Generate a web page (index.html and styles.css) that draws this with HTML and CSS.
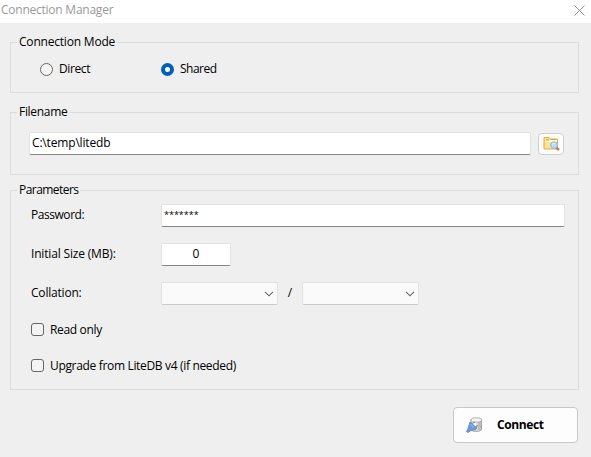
FILE: index.html
```html
<!DOCTYPE html>
<html lang="en">
<head>
<meta charset="utf-8">
<title>Connection Manager</title>
<link rel="stylesheet" href="styles.css">
</head>
<body>
<header class="titlebar">
  <span class="title">Connection Manager</span>
  <svg class="close" width="11" height="11" viewBox="0 0 11 11"><path d="M.5.5l10 10M10.5.5l-10 10" stroke="#8f8f8f" fill="none"/></svg>
</header>
<main class="content">
  <section class="group mode">
    <div class="legend"><span class="t-mode">Connection Mode</span></div>
    <div class="radios">
      <label class="option direct"><span class="radio"></span><span class="t-direct">Direct</span></label>
      <label class="option"><span class="radio checked"></span><span class="t-shared">Shared</span></label>
    </div>
  </section>
  <section class="group filename">
    <div class="legend"><span class="t-file">Filename</span></div>
    <div class="file-row">
      <div class="input path"><span class="t-path">C:\temp\litedb</span></div>
      <div class="browse">
        <svg width="17" height="16" viewBox="0 0 17 16">
          <path d="M1 1.5h5l1 1.500h7.500v10H1z" fill="#f8e29a" stroke="#dfad46"/>
          <path d="M2 5h4l1.500-1H14v2H2z" fill="#fffbe0"/>
          <path d="M2 12L4 6h10v6z" fill="#fae58f"/>
          <path d="M3 4h3M8 3.500h5" stroke="#d6a33d"/>
          <path d="M13.200 11.500l2.800 2.500" stroke="#b78354" stroke-width="2.400"/>
          <circle cx="11" cy="9" r="3.300" fill="#b9dcff" stroke="#8bb9eb"/>
          <path d="M9 8.500Q10 7 12 7.500" stroke="#e6f4ff" fill="none"/>
        </svg>
      </div>
    </div>
  </section>
  <section class="group params">
    <div class="legend"><span class="t-params">Parameters</span></div>
    <div class="field password"><span class="label"><span class="t-pass">Password:</span></span><div class="input"><span class="stars">*******</span></div></div>
    <div class="field size"><span class="label"><span class="t-size">Initial Size (MB):</span></span><div class="input">0</div></div>
    <div class="field collation">
      <span class="label"><span class="t-coll">Collation:</span></span>
      <div class="combo"><svg width="10" height="6" viewBox="0 0 10 6"><path d="M1 .8l4 4 4-4" stroke="#666" fill="none" stroke-width="1.100"/></svg></div>
      <span class="slash">/</span>
      <div class="combo"><svg width="10" height="6" viewBox="0 0 10 6"><path d="M1 .8l4 4 4-4" stroke="#666" fill="none" stroke-width="1.100"/></svg></div>
    </div>
    <label class="check readonly"><span class="box"></span><span class="t-read">Read only</span></label>
    <label class="check upgrade"><span class="box"></span><span class="t-upgrade">Upgrade from LiteDB v4 (if needed)</span></label>
  </section>
  <div class="connect">
    <svg width="17" height="16" viewBox="0 0 17 16">
      <path d="M5 3v9c0 3.200 10.500 3.200 10.500 0V3" fill="#dcdcde" stroke="#a3a3a6"/>
      <path d="M12 4.500h3v8l-3 1z" fill="#bdbdc0"/>
      <path d="M7 5.500h3v7H7z" fill="#fafafa"/>
      <ellipse cx="10.250" cy="3" rx="5.250" ry="2.200" fill="#f4f4f4" stroke="#adadaf"/>
      <path d="M4 5l7 6-2 1.800-4 .7L2 15.500.5 14.500 2 11.500z" fill="#6f9bdc" stroke="#5580c4" stroke-width=".8"/>
      <path d="M4.500 7.500l3.500 3" stroke="#a3c3f1"/>
      <path d="M6.500 6.500L9 5M10 9.500l2-1" stroke="#77777c"/>
    </svg>
    <span class="t-connect">Connect</span>
  </div>
</main>
</body>
</html>
```
FILE: styles.css
```css
* { box-sizing: border-box; }
body {
  margin: 0;
  width: 591px;
  height: 457px;
  overflow: hidden;
  background: #efefef;
  color: #000;
  font: 12px/18px "Open Sans", "Noto Sans", sans-serif;
  white-space: nowrap;
}
svg { display: block; flex: none; }
.titlebar {
  display: flex;
  justify-content: space-between;
  height: 23px;
  padding: 1px 6px 0 1px;
  background: #fff;
  color: #999;
}
.close { margin-top: 4px; }
.title { letter-spacing: -0.24px; }
.t-mode { letter-spacing: -0.2px; }
.t-direct { letter-spacing: -0.4px; }
.t-shared { letter-spacing: -0.5px; }
.t-file { letter-spacing: -0.3px; }
.t-path { letter-spacing: -0.17px; }
.t-params { letter-spacing: -0.55px; }
.t-pass { letter-spacing: -0.45px; }
.t-size { letter-spacing: -0.17px; }
.t-coll { letter-spacing: -0.2px; }
.t-read { letter-spacing: -0.33px; }
.t-upgrade { letter-spacing: -0.33px; }
.t-connect { letter-spacing: -0.4px; }
.stars { display: block; font-size: 9px; margin-left: -1px; line-height: 20px; }
.content {
  display: flex;
  flex-direction: column;
  padding: 19px 12px 0 10px;
}
.group { border: 1px solid #dcdcdc; }
.legend {
  width: max-content;
  height: 18px;
  margin: -10px 0 0 6px;
  padding: 0 2px;
  background: #efefef;
}
.mode { height: 51px; }
.filename { height: 63px; margin-top: 19px; }
.params { height: 200px; margin-top: 15px; }
.radios { display: flex; padding: 9px 0 0 29px; }
.option { display: flex; align-items: center; gap: 6px; }
.direct { width: 121px; }
.radio {
  width: 13px;
  height: 13px;
  border: 1px solid #666;
  border-radius: 50%;
  background: #f4f4f4;
}
.radio.checked { border: 4px solid #005fb8; background: #fff; }
.input {
  height: 23px;
  padding: 1px 3px;
  border: 1px solid #e2e2e2;
  border-bottom-color: #868686;
  border-radius: 2px;
  background: #fff;
}
.file-row { display: flex; align-items: flex-start; gap: 7px; padding: 11px 0 0 18px; }
.path { width: 502px; padding-left: 2px; }
.browse {
  display: flex;
  align-items: center;
  justify-content: center;
  width: 26px;
  height: 22px;
  margin-top: 1px;
  border: 1px solid #cfcfcf;
  border-radius: 4px;
  background: #fdfdfd;
}
.field { display: flex; padding-left: 20px; height: 23px; }
.label { width: 130px; padding-top: 2px; }
.password { margin-top: 5px; }
.password .input { width: 404px; padding-top: 0; }
.size { margin-top: 16px; }
.size .input { width: 70px; text-align: center; }
.collation { margin-top: 16px; }
.combo {
  display: flex;
  align-items: center;
  justify-content: flex-end;
  width: 117px;
  height: 23px;
  padding: 1px 3px 0 0;
  border: 1px solid #e2e2e2;
  border-bottom-color: #cacaca;
  border-radius: 2px;
  background: #fafafa;
}
.slash { width: 24px; padding-top: 2px; text-align: center; }
.check { display: flex; align-items: center; gap: 6px; height: 18px; padding-left: 20px; }
.check span:last-child { padding-top: 2px; }
.readonly { margin-top: 15px; }
.upgrade { margin-top: 18px; }
.box {
  width: 13px;
  height: 13px;
  border: 1px solid #666;
  border-radius: 3px;
  background: #f4f4f4;
}
.connect {
  display: flex;
  align-items: center;
  gap: 14px;
  align-self: flex-end;
  width: 125px;
  height: 36px;
  margin: 17px 1px 0 0;
  padding-left: 12px;
  border: 1px solid #c8c8c8;
  border-radius: 4px;
  background: #fdfdfd;
  font-weight: 700;
}
```
